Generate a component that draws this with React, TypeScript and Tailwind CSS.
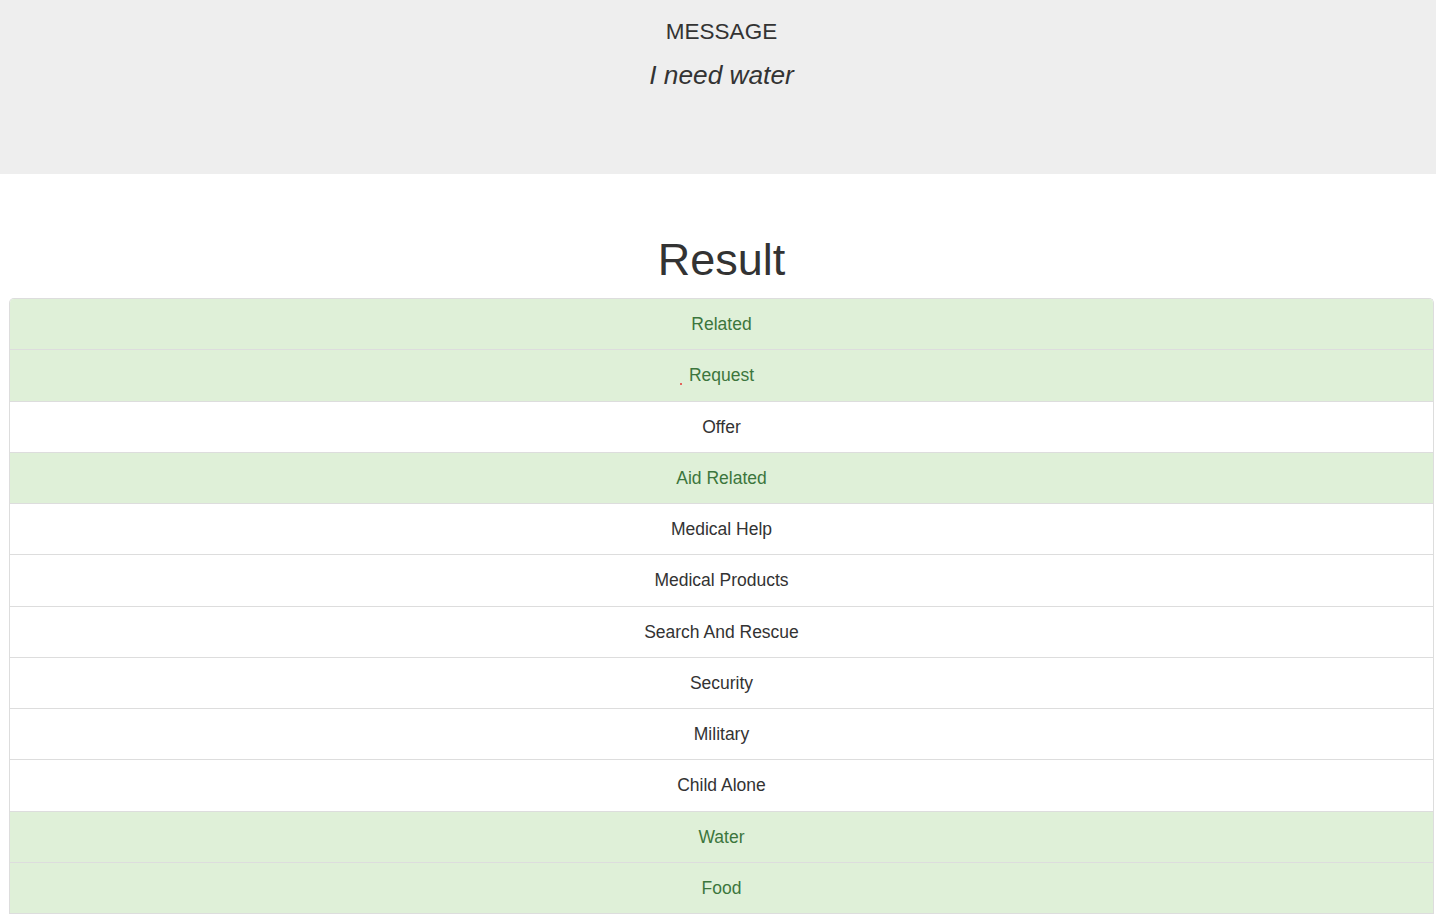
import React from 'react';

const rows: { label: string; hit: boolean }[] = [
  { label: 'Related', hit: true },
  { label: 'Request', hit: true },
  { label: 'Offer', hit: false },
  { label: 'Aid Related', hit: true },
  { label: 'Medical Help', hit: false },
  { label: 'Medical Products', hit: false },
  { label: 'Search And Rescue', hit: false },
  { label: 'Security', hit: false },
  { label: 'Military', hit: false },
  { label: 'Child Alone', hit: false },
  { label: 'Water', hit: true },
  { label: 'Food', hit: true },
];

function App() {
  return (
    <div className="min-h-screen bg-white text-[#333] font-['Liberation_Sans',Arial,sans-serif]">
      <div className="h-[174px] bg-[#eee] pl-[9px] pr-[2px] pt-[19px]">
        <div className="text-center">
          <h3 className="text-[22.5px] leading-[25px]">MESSAGE</h3>
          <p className="mt-[12px] text-[26.25px] leading-[39px] italic">I need water</p>
        </div>
      </div>

      <div className="pl-[9px] pr-[2px]">
        <h1 className="mt-[61px] mb-[13.5px] text-center text-[45px] leading-[49.5px]">Result</h1>

        <ul className="rounded-t-[5px] border-x border-t border-[#ddd] overflow-hidden">
          {rows.map((r) => (
            <li
              key={r.label}
              className={
                r.hit
                  ? 'relative border-b border-[#ddd] bg-[#dff0d8] px-[18.75px] pt-[13px] pb-[12px] text-center text-[17.5px] leading-[25.25px] text-[#3c763d]'
                  : 'relative border-b border-[#ddd] bg-white px-[18.75px] pt-[13px] pb-[12px] text-center text-[17.5px] leading-[25.25px] text-[#333]'
              }
            >
              {r.label === 'Request' && (
                <span className="absolute left-[670px] top-[33px] h-[2px] w-[2px] rounded-full bg-[#e53935]" />
              )}
              {r.label}
            </li>
          ))}
        </ul>
      </div>
    </div>
  );
}

export default App;
